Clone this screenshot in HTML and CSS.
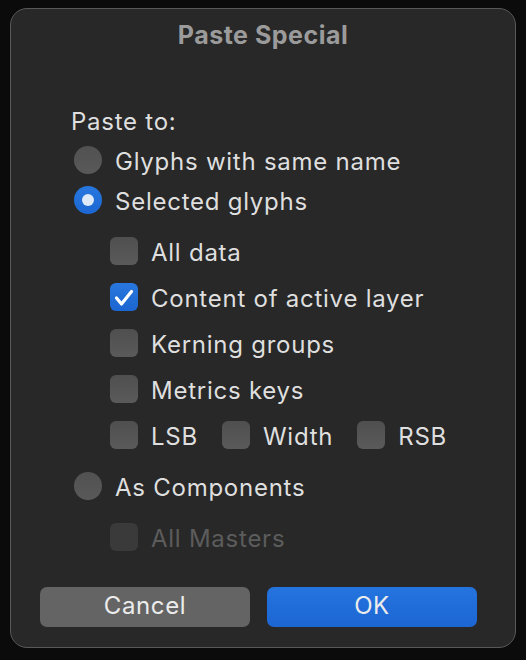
FILE: index.html
```html
<!DOCTYPE html>
<html>
<head>
<meta charset="utf-8">
<link rel="stylesheet" href="styles.css">
</head>
<body>
<div class="dialog">
  <h1 class="title">Paste Special</h1>
  <div class="content">
    <div class="section-label">Paste to:</div>
    <div class="radio-row">
      <span class="radio"></span><span class="label">Glyphs with same name</span>
    </div>
    <div class="radio-row">
      <span class="radio on"></span><span class="label">Selected glyphs</span>
    </div>
    <div class="options">
      <div class="check-row"><span class="check"></span><span class="label">All data</span></div>
      <div class="check-row"><span class="check on"><svg viewBox="0 0 28 28" width="28" height="28"><path d="M6.5 15 L11.5 21 L21.5 8.5" fill="none" stroke="#fff" stroke-width="3.2" stroke-linecap="round" stroke-linejoin="round"/></svg></span><span class="label">Content of active layer</span></div>
      <div class="check-row"><span class="check"></span><span class="label">Kerning groups</span></div>
      <div class="check-row"><span class="check"></span><span class="label">Metrics keys</span></div>
      <div class="check-row multi">
        <div class="item"><span class="check"></span><span class="label">LSB</span></div>
        <div class="item"><span class="check"></span><span class="label">Width</span></div>
        <div class="item"><span class="check"></span><span class="label">RSB</span></div>
      </div>
    </div>
    <div class="radio-row gap-top">
      <span class="radio"></span><span class="label">As Components</span>
    </div>
    <div class="options">
      <div class="check-row disabled"><span class="check"></span><span class="label">All Masters</span></div>
    </div>
  </div>
  <div class="buttons">
    <button class="btn cancel">Cancel</button>
    <button class="btn ok">OK</button>
  </div>
</div>
</body>
</html>
```
FILE: styles.css
```css
html, body {
  margin: 0;
  padding: 0;
  background: #0b0b0b;
}
body {
  width: 526px;
  height: 660px;
  font-family: Inter, "Liberation Sans", sans-serif;
  color: #dfdfdf;
}
.dialog {
  box-sizing: border-box;
  margin: 8px 0 0 10px;
  width: 506px;
  height: 640px;
  background: #282828;
  border: 1px solid #585858;
  border-radius: 17px;
  display: flex;
  flex-direction: column;
}
.title {
  margin: 11px 0 0;
  height: 30px;
  line-height: 30px;
  font-size: 25px;
  letter-spacing: 0.5px;
  font-weight: 700;
  text-align: center;
  color: #9b9b9b;
}
.content {
  padding-left: 63px;
  padding-top: 54px;
  display: flex;
  flex-direction: column;
}
.section-label {
  height: 36px;
  line-height: 36px;
  font-size: 24px;
  letter-spacing: 0.75px;
  margin-left: -3px;
}
.label {
  font-size: 24px;
  letter-spacing: 0.75px;
  line-height: 30px;
  padding-top: 3px;
  white-space: nowrap;
}
.radio-row {
  height: 40px;
  display: flex;
  align-items: center;
  gap: 13px;
}
.radio {
  box-sizing: border-box;
  width: 28px;
  height: 28px;
  border-radius: 50%;
  background: linear-gradient(#515151, #595959);
  flex: none;
  display: flex;
  align-items: center;
  justify-content: center;
}
.radio.on {
  background: linear-gradient(#2776de, #1c67d2);
}
.radio.on::after {
  content: "";
  width: 12px;
  height: 12px;
  border-radius: 50%;
  background: #dde9f9;
}
.options {
  padding-left: 36px;
  margin-top: 8px;
  display: flex;
  flex-direction: column;
}
.check-row {
  height: 46px;
  display: flex;
  align-items: center;
  gap: 13px;
}
.check-row.multi {
  gap: 24px;
}
.item {
  display: flex;
  align-items: center;
  gap: 13px;
}
.check {
  box-sizing: border-box;
  width: 28px;
  height: 28px;
  border-radius: 6px;
  background: linear-gradient(#4f4f4f, #5a5a5a);
  flex: none;
  display: flex;
}
.check.on {
  background: linear-gradient(#2877de, #1c66d1);
}
.disabled .check {
  background: #3a3a3a;
}
.disabled .label {
  color: #5c5c5c;
}
.radio-row.gap-top {
  margin-top: 8px;
}
.buttons {
  margin-top: 27px;
  padding-left: 29px;
  display: flex;
  gap: 17px;
}
.btn {
  width: 210px;
  height: 40px;
  border: none;
  border-radius: 7px;
  font-family: Inter, "Liberation Sans", sans-serif;
  font-size: 24px;
  letter-spacing: 0.6px;
  color: #ececec;
  padding: 0 0 3px;
}
.cancel {
  background: #646464;
}
.ok {
  background: linear-gradient(#2474e0, #1c66d2);
}
```
